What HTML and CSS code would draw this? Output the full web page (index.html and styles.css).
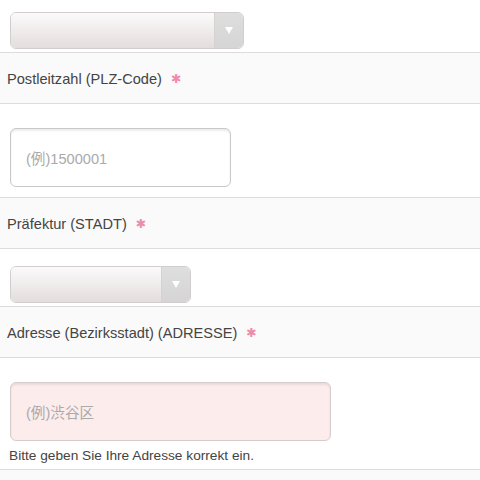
FILE: index.html
```html
<!DOCTYPE html>
<html lang="de">
<head>
<meta charset="utf-8">
<link rel="stylesheet" href="styles.css">
</head>
<body>
<div class="form">
  <div class="field field-first">
    <div class="select select-wide"><span class="select-body"></span><span class="select-arrow"><span class="tri"></span></span></div>
  </div>
  <div class="label-row">Postleitzahl (PLZ-Code)<span class="req">✱</span></div>
  <div class="field field-input">
    <div class="input input-zip"><span class="ph">(例)1500001</span></div>
  </div>
  <div class="label-row">Präfektur (STADT)<span class="req">✱</span></div>
  <div class="field field-select">
    <div class="select select-mid"><span class="select-body"></span><span class="select-arrow"><span class="tri"></span></span></div>
  </div>
  <div class="label-row">Adresse (Bezirksstadt) (ADRESSE)<span class="req">✱</span></div>
  <div class="field field-error">
    <div class="input input-addr error"><span class="ph">(例)渋谷区</span></div>
    <div class="help">Bitte geben Sie Ihre Adresse korrekt ein.</div>
  </div>
  <div class="rest"></div>
</div>
</body>
</html>
```
FILE: styles.css
```css
html, body {
  margin: 0;
  padding: 0;
  background: #fff;
  font-family: "Liberation Sans", "Noto Sans CJK JP", sans-serif;
  color: #333;
}
.form {
  display: flex;
  flex-direction: column;
  width: 480px;
  height: 480px;
  overflow: hidden;
}
.field {
  background: #fff;
  padding-left: 10px;
  display: flex;
  flex-direction: column;
  align-items: flex-start;
}
.field-first { padding-top: 12px; padding-bottom: 3px; }
.field-input { padding-top: 24px; padding-bottom: 10px; }
.field-select { padding-top: 17px; padding-bottom: 3px; }
.field-error { padding-top: 24px; }

.label-row {
  height: 52px;
  flex-shrink: 0;
  box-sizing: border-box;
  border-top: 1px solid #dcdcdc;
  border-bottom: 1px solid #dcdcdc;
  background: #fafafa;
  display: flex;
  align-items: center;
  padding-left: 7px;
  padding-top: 2px;
  font-size: 14.6px;
  color: #444;
}
.req {
  color: #f08aa8;
  margin-left: 9px;
  font-family: "DejaVu Sans", sans-serif;
  font-size: 12.5px;
  position: relative;
  top: -1px;
}

.select {
  display: flex;
  height: 37px;
  box-sizing: border-box;
  border: 1px solid #d2cece;
  border-radius: 6px;
  overflow: hidden;
}
.select-wide { width: 234px; }
.select-mid { width: 181px; }
.select-body {
  flex: 1;
  background: linear-gradient(to bottom, #fbfafa 0%, #ede9e9 60%, #e3dddd 100%);
}
.select-arrow {
  width: 28px;
  background: linear-gradient(to bottom, #dedede, #d5d5d5);
  border-left: 1px solid #d6d2d2;
  display: flex;
  align-items: center;
  justify-content: center;
}
.tri {
  width: 0;
  height: 0;
  border-left: 4.5px solid transparent;
  border-right: 4.5px solid transparent;
  border-top: 7px solid #fff;
}

.input {
  height: 59px;
  flex-shrink: 0;
  box-sizing: border-box;
  border: 1px solid #c8c8c8;
  border-radius: 6px;
  background: #fff;
  box-shadow: inset 0 2px 2px rgba(0,0,0,0.08);
  display: flex;
  align-items: center;
  padding-left: 15px;
}
.input-zip { width: 221px; }
.input-addr { width: 321px; }
.input.error {
  background: #fdecec;
  border-color: #d6cccc;
}
.ph {
  font-size: 14.6px;
  color: #aaa;
}
.help {
  height: 28px;
  display: flex;
  align-items: center;
  font-size: 13.7px;
  color: #444;
  margin-left: -1px;
}
.rest {
  flex: 1;
  background: #fafafa;
  border-top: 1px solid #dcdcdc;
}
```
